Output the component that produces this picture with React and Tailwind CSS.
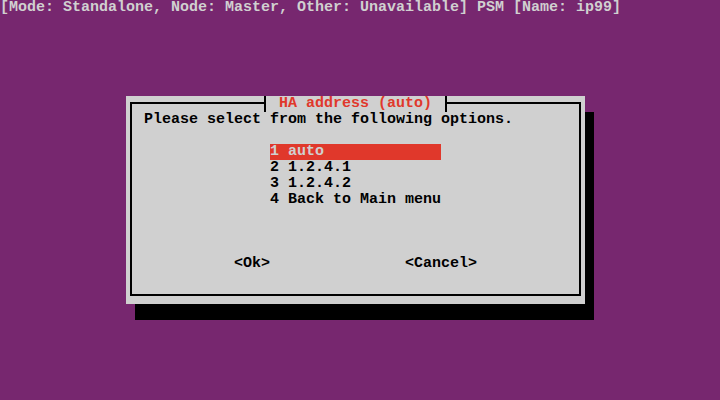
export default function App() {
  const items = ["1 auto", "2 1.2.4.1", "3 1.2.4.2", "4 Back to Main menu"];
  return (
    <div className="w-[720px] h-[400px] overflow-hidden bg-[#77276f] font-['Liberation_Mono',monospace] text-[15px] leading-[16px] font-bold">
      <div className="h-4 whitespace-pre text-[#d0d0d0]">
        [Mode: Standalone, Node: Master, Other: Unavailable] PSM [Name: ip99]
      </div>
      <div className="mt-[80px] ml-[126px] w-[459px] h-[208px] bg-[#d0d0d0] shadow-[9px_16px_0_0_#000] pt-[6px] pl-[4px] pr-[4px] pb-[8px]">
        <div className="relative h-full border-2 border-black pt-[8px] pl-[12px] text-black">
          <div className="absolute left-[132px] top-[-8px] h-4 bg-[#d0d0d0] border-l-2 border-r-2 border-black pl-[4px] pr-[4px] whitespace-pre text-[#e0382b]">
            {" HA address (auto) "}
          </div>
          <div className="h-4 whitespace-pre">Please select from the following options.</div>
          <div className="mt-4 ml-[126px] flex flex-col">
            {items.map((t, i) => (
              <div
                key={t}
                className={
                  i === 0
                    ? "h-4 w-[171px] whitespace-pre bg-[#e0382b] text-[#d0d0d0]"
                    : "h-4 w-[171px] whitespace-pre"
                }
              >
                {t}
              </div>
            ))}
          </div>
          <div className="mt-[48px] ml-[90px] flex h-4 whitespace-pre">
            <span>{"<Ok>"}</span>
            <span className="ml-[135px]">{"<Cancel>"}</span>
          </div>
        </div>
      </div>
    </div>
  );
}
